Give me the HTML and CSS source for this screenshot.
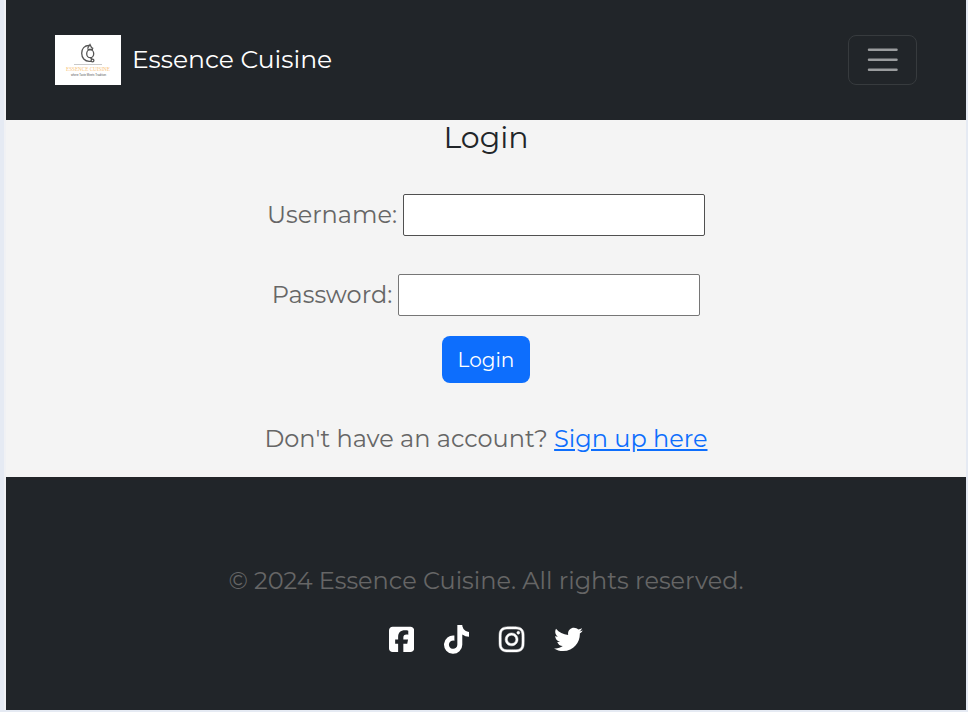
FILE: index.html
```html
<!DOCTYPE html>
<html lang="en">
<head>
<meta charset="utf-8">
<title>Essence Cuisine</title>
<link rel="stylesheet" href="styles.css">
</head>
<body>
<div class="page">
  <header class="navbar">
    <a class="brand">
      <svg class="logo" viewBox="0 0 66 50">
        <rect width="66" height="50" fill="#fff"/>
        <g fill="none" stroke="#555" stroke-width="1.300">
          <path d="M34 10.500c-4.500 0-7.300 3.300-7.300 7.800s3 8 7.500 8h2"/>
          <path d="M32.500 13.500l2.500-4 1.500 3 1.800 1M32.500 14.500h5.500M35.500 22.500l1.500 2"/>
          <ellipse cx="35.200" cy="18.700" rx="3.500" ry="4"/>
          <circle cx="37.500" cy="25.500" r="1.400"/>
        </g>
        <path d="M19 29.500h28" stroke="#bbb" stroke-width=".8"/>
        <text class="logo-name" x="11" y="36.200" textLength="44" lengthAdjust="spacingAndGlyphs">ESSENCE CUISINE</text>
        <text class="logo-tag" x="16" y="40.600" textLength="35" lengthAdjust="spacingAndGlyphs">where Taste Meets Tradition</text>
      </svg>
      <span class="brand-name">Essence Cuisine</span>
    </a>
    <button class="toggler" aria-label="Menu">
      <svg viewBox="0 0 30 30"><path stroke="#fff" stroke-opacity=".55" stroke-linecap="round" stroke-miterlimit="10" stroke-width="2" d="M4 7h22M4 15h22M4 23h22"/></svg>
    </button>
  </header>
  <main class="login">
    <h2 class="title">Login</h2>
    <div class="field"><label for="u">Username:</label><input class="active" id="u" type="text"></div>
    <div class="field"><label for="p">Password:</label><input id="p" type="password"></div>
    <button class="submit">Login</button>
    <p class="signup"><span>Don't have an account?</span> <a href="#">Sign up here</a></p>
  </main>
  <footer class="footer">
    <p class="copyright">© 2024 Essence Cuisine. All rights reserved.</p>
    <div class="social">
      <svg viewBox="0 0 448 512"><path d="M64 32C28.700 32 0 60.700 0 96V416c0 35.300 28.700 64 64 64h98.200V334.200H109.400V256h52.800V222.300c0-87.100 39.400-127.500 125-127.500c16.200 0 44.200 3.200 55.700 6.400V172c-6-.6-16.500-1-29.600-1c-42 0-58.200 15.900-58.200 57.200V256h83.600l-14.400 78.200H255V480H384c35.300 0 64-28.700 64-64V96c0-35.300-28.700-64-64-64H64z"/></svg>
      <svg viewBox="0 0 448 512"><path d="M448,209.910a210.060,210.060,0,0,1-122.770-39.250V349.380A162.550,162.550,0,1,1,185,188.310V278.200a74.620,74.620,0,1,0,52.230,71.180V0l88,0a121.180,121.180,0,0,0,1.860,22.170h0A122.180,122.180,0,0,0,381,102.390a121.430,121.430,0,0,0,67,20.140Z"/></svg>
      <svg class="outlined" viewBox="0 0 448 512"><path d="M224.100 141c-63.600 0-114.900 51.300-114.900 114.900s51.300 114.900 114.900 114.900S339 319.500 339 255.900 287.700 141 224.100 141zm0 189.600c-41.100 0-74.700-33.500-74.700-74.700s33.500-74.700 74.700-74.700 74.700 33.500 74.700 74.700-33.600 74.700-74.700 74.700zm146.400-194.300c0 14.900-12 26.800-26.800 26.800-14.900 0-26.800-12-26.800-26.800s12-26.800 26.800-26.800 26.800 12 26.800 26.800zm76.100 27.200c-1.700-35.900-9.900-67.700-36.200-93.900-26.200-26.200-58-34.400-93.900-36.200-37-2.100-147.900-2.100-184.900 0-35.800 1.700-67.600 9.900-93.900 36.100s-34.400 58-36.200 93.900c-2.100 37-2.100 147.900 0 184.900 1.700 35.900 9.900 67.700 36.200 93.900s58 34.400 93.900 36.200c37 2.100 147.900 2.100 184.900 0 35.900-1.700 67.700-9.900 93.900-36.200 26.200-26.200 34.400-58 36.200-93.900 2.100-37 2.100-147.800 0-184.800zM398.800 388c-7.800 19.600-22.900 34.700-42.600 42.600-29.500 11.700-99.500 9-132.100 9s-102.700 2.600-132.100-9c-19.600-7.800-34.700-22.900-42.600-42.600-11.700-29.500-9-99.500-9-132.100s-2.600-102.700 9-132.100c7.800-19.600 22.900-34.700 42.600-42.600 29.500-11.700 99.500-9 132.100-9s102.700-2.600 132.100 9c19.600 7.800 34.700 22.900 42.600 42.600 11.700 29.500 9 99.500 9 132.100s2.700 102.700-9 132.100z"/></svg>
      <svg class="wide" viewBox="0 0 512 512"><path d="M459.370 151.716c.325 4.548.325 9.097.325 13.645 0 138.720-105.583 298.558-298.558 298.558-59.452 0-114.680-17.219-161.137-47.106 8.447.974 16.568 1.299 25.340 1.299 49.055 0 94.213-16.568 130.274-44.832-46.132-.975-84.792-31.188-98.112-72.772 6.498.974 12.995 1.624 19.818 1.624 9.421 0 18.843-1.300 27.614-3.573-48.081-9.747-84.143-51.980-84.143-102.985v-1.299c13.969 7.797 30.214 12.670 47.431 13.319-28.264-18.843-46.781-51.005-46.781-87.391 0-19.492 5.197-37.360 14.294-52.954 51.655 63.675 129.300 105.258 216.365 109.807-1.624-7.797-2.599-15.918-2.599-24.040 0-57.828 46.782-104.934 104.934-104.934 30.213 0 57.502 12.670 76.670 33.137 23.715-4.548 46.456-13.320 66.599-25.340-7.798 24.366-24.366 44.833-46.132 57.827 21.117-2.273 41.584-8.122 60.426-16.243-14.292 20.791-32.161 39.308-52.628 54.253z"/></svg>
    </div>
  </footer>
</div>
</body>
</html>
```
FILE: styles.css
```css
* { box-sizing: border-box; }
body {
  margin: 0;
  height: 712px;
  overflow: hidden;
  background: #e5eaf3;
  font-family: Montserrat, Inter, sans-serif;
  font-weight: 400;
}
.page {
  height: 710px;
  margin: 0 2px 0 4px;
  border-left: 2px solid #f0f1f4;
  background: #212529;
}
.navbar {
  height: 120px;
  padding: 0 49px;
  display: flex;
  align-items: center;
  justify-content: space-between;
  background: #212529;
}
.brand { display: flex; align-items: center; gap: 11px; color: #fff; }
.logo { width: 66px; height: 50px; display: block; }
.logo-name { font: 6.5px "Liberation Serif", serif; fill: #f8c47c; }
.logo-tag { font: 3.4px "Liberation Sans", sans-serif; fill: #555; }
.brand-name { font-size: 25px; line-height: 38px; padding-bottom: 2px; white-space: nowrap; }
.toggler {
  width: 69px;
  height: 50px;
  padding: 0;
  display: flex;
  align-items: center;
  justify-content: center;
  background: transparent;
  border: 1px solid #373b3e;
  border-radius: 8px;
}
.toggler svg { width: 37.5px; height: 37.5px; fill: none; }
.login {
  height: 357px;
  display: flex;
  flex-direction: column;
  align-items: center;
  background: #f4f4f4;
  color: #666;
  font-size: 24px;
}
.title { margin: 0; font-size: 30px; font-weight: 400; line-height: 36px; color: #212529; }
.field { display: flex; align-items: center; gap: 6px; height: 42px; margin-top: 38px; white-space: nowrap; }
.field label { line-height: 36px; }
.field input {
  width: 302px;
  height: 42px;
  border: 1px solid #767676;
  border-radius: 2px;
  background: #fff;
  outline: none;
}
.field input.active { border-color: #505050; }
.submit {
  width: 88px;
  height: 47px;
  margin-top: 20px;
  padding: 1px 0 0;
  border: 0;
  border-radius: 8px;
  background: #0d6efd;
  color: #fff;
  font: 400 20px/46px Montserrat, Inter, sans-serif;
}
.signup { margin: 38px 0 0; line-height: 36px; white-space: nowrap; }
.signup a { color: #0d6efd; }
.footer {
  height: 233px;
  padding-top: 86px;
  display: flex;
  flex-direction: column;
  align-items: center;
  background: #212529;
  color: #666;
}
.copyright { margin: 0; font-size: 24px; line-height: 36px; white-space: nowrap; }
.social { display: flex; gap: 29.8px; margin-top: 26px; }
.social svg { width: 25.2px; height: 28.8px; fill: #fff; }
.social svg.wide { width: 28.8px; }
.social svg.outlined { stroke: #fff; stroke-width: 8px; overflow: visible; }
```
